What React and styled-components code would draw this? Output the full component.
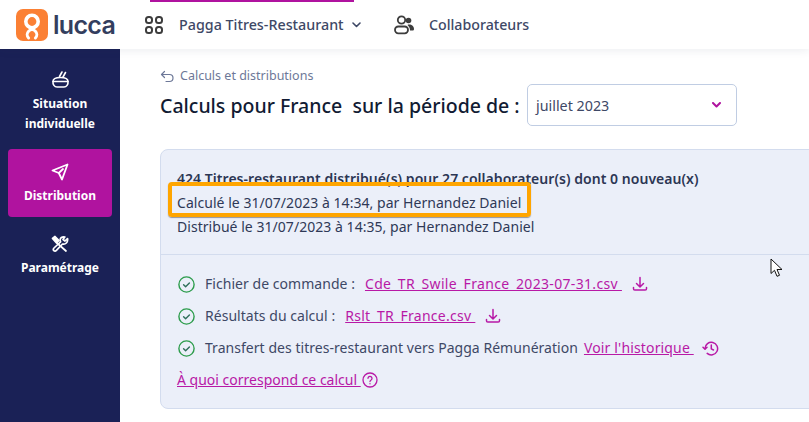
import React from "react";
import styled, { createGlobalStyle } from "styled-components";

const GlobalStyle = createGlobalStyle`
  html, body {
    margin: 0;
    height: 100%;
    overflow: hidden;
    background: #fff;
  }
  body {
    font-family: "Noto Sans", sans-serif;
    color: #2f3957;
  }
`;

const Page = styled.div`
  width: 809px;
  height: 422px;
  display: grid;
  grid-template-rows: 49px 1fr;
  overflow: hidden;
  position: relative;
`;

const Header = styled.header`
  display: flex;
  align-items: center;
  padding-left: 16px;
  background: #fff;
  box-shadow: 0 2px 8px rgba(40, 50, 90, 0.08);
  position: relative;
  z-index: 1;
`;

const Logo = styled.div`
  display: flex;
  align-items: center;
  gap: 5px;
  width: 129px;
`;

const LogoWord = styled.span`
  font-family: "Inter", sans-serif;
  font-size: 25px;
  font-weight: 600;
  letter-spacing: -0.7px;
  color: #333e5e;
`;

const AppSwitch = styled.div`
  display: flex;
  align-items: center;
  height: 49px;
  width: 209px;
  gap: 16px;
  position: relative;
  white-space: nowrap;
  svg {
    flex-shrink: 0;
  }
  &::before {
    content: "";
    position: absolute;
    top: 0;
    left: 5px;
    right: 0;
    height: 2px;
    background: #b0139f;
  }
`;

const AppName = styled.span`
  font-size: 14.3px;
  font-weight: 500;
  color: #3e4866;
`;

const AppChevron = styled.span`
  display: flex;
  margin-left: -8px;
`;

const NavLink = styled.div`
  display: flex;
  align-items: center;
  gap: 15px;
  margin-left: 40px;
  font-size: 14.2px;
  font-weight: 500;
  color: #3e4866;
`;

const Body = styled.div`
  display: grid;
  grid-template-columns: 120px 1fr;
  min-height: 0;
`;

const Sidebar = styled.nav`
  background: #1a2156;
  display: flex;
  flex-direction: column;
  padding: 18px 8px 0;
  gap: 15px;
`;

const SideItem = styled.div`
  display: flex;
  flex-direction: column;
  align-items: center;
  text-align: center;
  gap: 5px;
  padding: ${(p) => (p.$active ? "14px 0 11px" : "3px 0 0")};
  background: ${(p) => (p.$active ? "#b0139f" : "transparent")};
  border-radius: 4px;
  color: #fff;
  font-size: 12px;
  font-weight: 700;
  line-height: 20px;
`;

const Main = styled.main`
  padding: 19px 0 0 40px;
  min-width: 0;
`;

const Back = styled.div`
  display: flex;
  align-items: center;
  gap: 5px;
  font-size: 12.5px;
  line-height: 16px;
  color: #6d7898;
`;

const TitleRow = styled.div`
  display: flex;
  align-items: center;
  gap: 7px;
`;

const Title = styled.h1`
  margin: 0;
  width: 360px;
  font-size: 19.5px;
  font-weight: 500;
  color: #111b33;
  white-space: pre;
`;

const Select = styled.div`
  width: 210px;
  height: 42px;
  box-sizing: border-box;
  border: 1px solid #c0cde3;
  border-radius: 5px;
  display: flex;
  align-items: center;
  justify-content: space-between;
  padding: 0 15px 0 8px;
  font-size: 14.3px;
  color: #3e4866;
`;

const Card = styled.section`
  width: 700px;
  height: 260px;
  box-sizing: border-box;
  margin-top: 23px;
  background: #ebeff9;
  border: 1px solid #d3dcee;
  border-radius: 8px;
`;

const Summary = styled.div`
  box-sizing: border-box;
  height: 105px;
  padding: 17px 16px 0;
  font-size: 14px;
  letter-spacing: 0.04px;
  line-height: 24px;
  border-bottom: 1px solid #d3dcee;
`;

const SummaryTitle = styled.div`
  font-weight: 600;
  color: #2c3654;
`;

const Checks = styled.div`
  padding: 17px 16px 0;
  display: flex;
  flex-direction: column;
  gap: 8px;
  font-size: 14px;
  letter-spacing: 0.04px;
  line-height: 24px;
`;

const Row = styled.div`
  display: flex;
  align-items: center;
  gap: 10px;
  color: #3e4866;
  white-space: nowrap;
  padding-left: ${(p) => (p.$plain ? 0 : "1px")};
`;

const Inline = styled.span`
  display: inline-flex;
  align-items: center;
  gap: ${(p) => p.$gap || 8}px;
`;

const FileLink = styled.a`
  color: #b819a6;
  text-decoration: underline;
  white-space: pre;
  letter-spacing: ${(p) => p.$spacing || 0}px;
  margin-right: ${(p) => p.$after || 0}px;
`;

const Highlight = styled.div`
  position: absolute;
  left: 168px;
  top: 182px;
  width: 363px;
  height: 35px;
  box-sizing: border-box;
  border: 4px solid #ffa500;
  border-radius: 4px;
  box-shadow: 0 1px 1px rgba(60, 60, 60, 0.5);
  pointer-events: none;
`;

const Cursor = styled.svg`
  position: absolute;
  left: 770px;
  top: 258px;
`;

const CheckIcon = () => (
  <svg width="17" height="17" viewBox="0 0 17 17" fill="none" stroke="#2c9c4b" strokeWidth="1.4" strokeLinecap="round" strokeLinejoin="round">
    <circle cx="8.5" cy="8.5" r="7.6" />
    <path d="M5.6 8.7l2 2 3.8-3.8" stroke="#2f6f5a" />
  </svg>
);

const DownloadIcon = () => (
  <svg width="16" height="16" viewBox="0 0 16 16" fill="none" stroke="#b819a6" strokeWidth="1.5" strokeLinecap="round" strokeLinejoin="round">
    <path d="M8 1.5v9M4.500 7.500L8 11l3.500-3.500M1.500 11.500v1.200c0 .7.6 1.300 1.300 1.300h10.400c.7 0 1.300-.6 1.300-1.300v-1.200" />
  </svg>
);

const HistoryIcon = () => (
  <svg width="17" height="17" viewBox="0 0 17 17" fill="none" stroke="#b819a6" strokeWidth="1.5" strokeLinecap="round" strokeLinejoin="round">
    <path d="M3 8.500a6.300 6.300 0 1 1 2.200 4.900" />
    <path d="M1 7.200l2 2 2-2" />
    <path d="M9.300 5v3.800l2.200 1.200" />
  </svg>
);

const HelpIcon = () => (
  <svg width="16" height="16" viewBox="0 0 16 16" fill="none" stroke="#b819a6" strokeWidth="1.300" strokeLinecap="round">
    <circle cx="8" cy="8" r="7" />
    <path d="M6 6.300a2 2 0 1 1 3.100 1.700c-.7.400-1.100.8-1.100 1.500" />
    <path d="M8 11.700v.1" />
  </svg>
);

const LuccaLogo = () => (
  <svg width="32" height="32" viewBox="0 0 32 32">
    <rect width="32" height="32" rx="7" fill="#fb8034" />
    <g fill="none" stroke="#fff">
      <circle cx="16" cy="12.500" r="6.200" strokeWidth="3.600" />
      <path d="M12.600 29a4.800 4.800 0 1 1 6.800 0" strokeWidth="3" strokeLinecap="round" />
    </g>
  </svg>
);

const GridIcon = () => (
  <svg width="18" height="18" viewBox="0 0 18 18" fill="none" stroke="#3d3d3d" strokeWidth="2">
    <rect x="1" y="1" width="6" height="6" rx="2.500" />
    <rect x="11" y="1" width="6" height="6" rx="2.500" />
    <rect x="1" y="11" width="6" height="6" rx="2.500" />
    <rect x="11" y="11" width="6" height="6" rx="2.500" />
  </svg>
);

const UsersIcon = () => (
  <svg width="20" height="20" viewBox="0 0 20 20">
    <circle cx="7.500" cy="5" r="3.700" fill="none" stroke="#3d3d3d" strokeWidth="1.800" />
    <rect x="1" y="11.500" width="13" height="6.800" rx="3.300" fill="none" stroke="#3d3d3d" strokeWidth="1.800" />
    <circle cx="14.500" cy="5.500" r="2.800" fill="#3d3d3d" />
    <path d="M15 9.500c3 0 5 2 5 4.500 0 1-.6 1.500-1.500 1.500h-2.500c0-2.500-.8-4-2.500-5.500.4-.4.900-.5 1.500-.5z" fill="#3d3d3d" />
  </svg>
);

const Chevron = ({ color = "#3e4866", width = 1.6 }) => (
  <svg width="9" height="6" viewBox="0 0 9 6" fill="none" stroke={color} strokeWidth={width} strokeLinecap="round" strokeLinejoin="round">
    <path d="M1 1l3.500 3.500L8 1" />
  </svg>
);

const BowlIcon = () => (
  <svg width="19" height="19" viewBox="0 0 19 19" fill="none" stroke="#fff" strokeWidth="1.600" strokeLinecap="round" strokeLinejoin="round">
    <path d="M2 11.500h15c.4 3-1.500 5.500-4 5.500H6c-2.500 0-4.400-2.500-4-5.500z" />
    <path d="M2 11.500C2 8.500 5 7.500 9.500 7.500s7.500 1 7.500 4" />
    <path d="M8.500 6.500l2.500-4.500M12 7l2.500-4.500" />
  </svg>
);

const SendIcon = () => (
  <svg width="18" height="18" viewBox="0 0 18 18" fill="none" stroke="#fff" strokeWidth="1.800" strokeLinejoin="round" strokeLinecap="round">
    <path d="M1.500 7.500L16.500 1.500 11 16.500 7.800 10z" />
    <path d="M7.800 10L12 6" />
  </svg>
);

const ToolsIcon = () => (
  <svg width="18" height="18" viewBox="0 0 18 18" fill="none" stroke="#fff" strokeWidth="1.700" strokeLinejoin="round" strokeLinecap="round">
    <path d="M1.500 3.500L4 1.500 8 5.500 5.500 8z" fill="#fff" />
    <path d="M6 8l9 8" />
    <path d="M16.500 3.500L14 6l-2-1.500L13.800 2c-2.500-.8-5 1-4.600 3.500.1.600.2 1 .4 1.300L3 13c-1.800 1.800.6 4.200 2.400 2.400L11.500 9c2.800.9 5.800-1.800 5-5.500z" />
  </svg>
);

export default function App() {
  return (
    <Page>
      <GlobalStyle />
      <Header>
        <Logo>
          <LuccaLogo />
          <LogoWord>lucca</LogoWord>
        </Logo>
        <AppSwitch>
          <GridIcon />
          <AppName>Pagga Titres-Restaurant</AppName>
          <AppChevron>
            <Chevron />
          </AppChevron>
        </AppSwitch>
        <NavLink>
          <UsersIcon />
          Collaborateurs
        </NavLink>
      </Header>
      <Body>
        <Sidebar>
          <SideItem>
            <BowlIcon />
            <span>
              Situation
              <br />
              individuelle
            </span>
          </SideItem>
          <SideItem $active>
            <SendIcon />
            <span>Distribution</span>
          </SideItem>
          <SideItem>
            <ToolsIcon />
            <span>Paramétrage</span>
          </SideItem>
        </Sidebar>
        <Main>
          <Back>
            <svg width="15" height="13" viewBox="0 0 15 13" fill="none" stroke="#6d7898" strokeWidth="1.200" strokeLinecap="round" strokeLinejoin="round">
              <path d="M4.500 1.500L1.500 4.500l3 3M1.500 4.500h8c2 0 3.500 1.500 3.500 3.500s-1.500 3.500-3.500 3.500H6" />
            </svg>
            Calculs et distributions
          </Back>
          <TitleRow>
            <Title>Calculs pour France  sur la période de :</Title>
            <Select>
              juillet 2023
              <Chevron color="#b0139f" width={2} />
            </Select>
          </TitleRow>
          <Card>
            <Summary>
              <SummaryTitle>424 Titres-restaurant distribué(s) pour 27 collaborateur(s) dont 0 nouveau(x)</SummaryTitle>
              <div>Calculé le 31/07/2023 à 14:34, par Hernandez Daniel</div>
              <div>Distribué le 31/07/2023 à 14:35, par Hernandez Daniel</div>
            </Summary>
            <Checks>
              <Row>
                <CheckIcon />
                <Inline $gap={10}>
                  Fichier de commande :
                  <FileLink $spacing={0.33}>Cde_TR_Swile_France_2023-07-31.csv </FileLink>
                  <DownloadIcon />
                </Inline>
              </Row>
              <Row>
                <CheckIcon />
                <Inline $gap={10}>
                  Résultats du calcul :
                  <FileLink $spacing={0.28}>Rslt_TR_France.csv </FileLink>
                  <DownloadIcon />
                </Inline>
              </Row>
              <Row>
                <CheckIcon />
                <Inline $gap={6}>
                  Transfert des titres-restaurant vers Pagga Rémunération
                  <FileLink $spacing={0.15} $after={2}>Voir l'historique </FileLink>
                  <HistoryIcon />
                </Inline>
              </Row>
              <Row $plain>
                <Inline $gap={1}>
                  <FileLink>À quoi correspond ce calcul </FileLink>
                  <HelpIcon />
                </Inline>
              </Row>
            </Checks>
          </Card>
        </Main>
      </Body>
      <Highlight />
      <Cursor width="13" height="20" viewBox="0 0 13 20">
        <path d="M1 1v14.500l3.500-3.200 2.500 6 2.500-1-2.500-5.800H12z" fill="#fff" stroke="#111" strokeWidth="1" strokeLinejoin="round" />
      </Cursor>
    </Page>
  );
}
